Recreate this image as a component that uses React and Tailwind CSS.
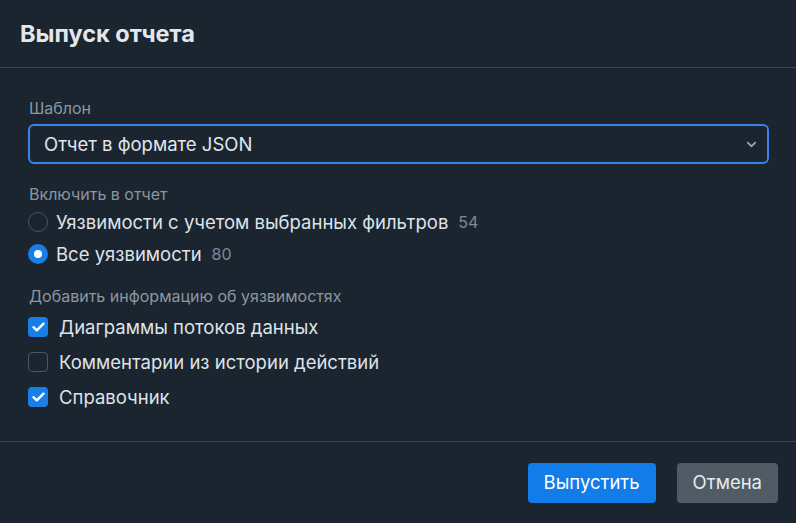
import React, { useState } from 'react';
import { FaChevronDown } from 'react-icons/fa';

function Radio({ checked, label, count, onChange }) {
  return (
    <label className="flex items-center h-8 cursor-pointer" onClick={onChange}>
      <span
        className={`w-5 h-5 rounded-full flex items-center justify-center ${
          checked ? 'bg-[#1a7ee8]' : 'border border-[#4a5560]'
        }`}
      />
      {checked && <span className="w-2 h-2 rounded-full bg-white -ml-[14px] mr-[6px]" />}
      <span className="text-[18.5px] text-[#dfe3e8] leading-6 ml-2">{label}</span>
      <span className="text-[16px] text-[#7f8a96] ml-[10px]">{count}</span>
    </label>
  );
}

function Checkbox({ checked, label, onChange }) {
  return (
    <label className="flex items-center gap-[11px] h-[35px] cursor-pointer" onClick={onChange}>
      <span
        className={`w-5 h-5 rounded-[4px] flex items-center justify-center ${
          checked ? 'bg-[#1a7ee8]' : 'border border-[#4a5560]'
        }`}
      >
        {checked && (
          <svg width="13" height="10" viewBox="0 0 13 10" fill="none">
            <path d="M1.5 5.2 L4.8 8.3 L11.5 1.7" stroke="white" strokeWidth="2.4" strokeLinecap="round" strokeLinejoin="round" />
          </svg>
        )}
      </span>
      <span className="text-[18.5px] text-[#dfe3e8] leading-6">{label}</span>
    </label>
  );
}

export default function App() {
  const [scope, setScope] = useState('all');
  const [opts, setOpts] = useState({ diagrams: true, comments: false, ref: true });

  const toggle = (key) => setOpts({ ...opts, [key]: !opts[key] });

  return (
    <div className="w-[796px] h-[523px] bg-[#1b2530] flex flex-col font-['Inter',sans-serif]">
      {/* Header */}
      <div className="h-[68px] flex items-center px-5 border-b border-[#3a444e] shrink-0">
        <h1 className="text-[23.5px] font-bold text-[#e3e7eb] leading-8">Выпуск отчета</h1>
      </div>

      {/* Body */}
      <div className="flex-1 pl-7 pr-[27px] pt-[30px]">
        <div className="text-[16px] text-[#8c96a1] leading-5 pl-px">Шаблон</div>
        <div className="mt-[6px] h-10 rounded-[6px] border-2 border-[#3b82f0] flex items-center justify-between pl-[14px] pr-[10px]">
          <span className="text-[18.5px] text-[#e3e7eb] leading-6">Отчет в формате JSON</span>
          <FaChevronDown className="w-[11px] h-[11px] text-[#9aa4ae]" />
        </div>

        <div className="mt-5 text-[16px] text-[#8c96a1] leading-5 pl-px">Включить в отчет</div>
        <div className="mt-[2px] flex flex-col">
          <Radio
            checked={scope === 'filtered'}
            label="Уязвимости с учетом выбранных фильтров"
            count="54"
            onChange={() => setScope('filtered')}
          />
          <Radio checked={scope === 'all'} label="Все уязвимости" count="80" onChange={() => setScope('all')} />
        </div>

        <div className="mt-4 text-[16px] text-[#8c96a1] leading-5 pl-px">Добавить информацию об уязвимостях</div>
        <div className="mt-[3px] flex flex-col">
          <Checkbox checked={opts.diagrams} label="Диаграммы потоков данных" onChange={() => toggle('diagrams')} />
          <Checkbox checked={opts.comments} label="Комментарии из истории действий" onChange={() => toggle('comments')} />
          <Checkbox checked={opts.ref} label="Справочник" onChange={() => toggle('ref')} />
        </div>
      </div>

      {/* Footer */}
      <div className="h-[82px] border-t border-[#3a444e] flex items-center justify-end gap-[21px] pr-[18px] shrink-0">
        <button className="h-[40px] px-4 rounded-[4px] bg-[#127ce8] text-white text-[18.5px]">Выпустить</button>
        <button className="h-[40px] px-4 rounded-[4px] bg-[#505b66] text-[#e8ebee] text-[18.5px]">Отмена</button>
      </div>
    </div>
  );
}
